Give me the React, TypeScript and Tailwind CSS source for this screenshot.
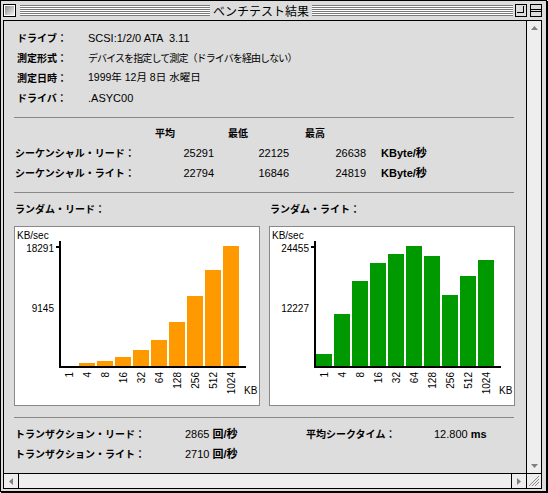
import React from "react";

const F = "font-['Liberation_Sans','Noto_Sans_CJK_JP',sans-serif]";

const XL = ["1", "4", "8", "16", "32", "64", "128", "256", "512", "1024"];

function Chart({ max, mid, heights, color }: { max: string; mid: string; heights: number[]; color: string }) {
  return (
    <div className="w-[246px] h-[180px] border border-[#888] bg-white">
      <svg width="244" height="178" className="block" fontFamily="'Liberation Sans', sans-serif" fontSize="10">
        <text x="2" y="12" fill="#000">KB/sec</text>
        <text x="39" y="25" textAnchor="end" fill="#000">{max}</text>
        <rect x="41" y="19" width="3" height="2" fill="#000" />
        <text x="39" y="85" textAnchor="end" fill="#000">{mid}</text>
        <rect x="44" y="14" width="2" height="127" fill="#000" />
        <rect x="44" y="139" width="187" height="2" fill="#000" />
        {heights.map((h, i) => (
          <rect key={i} x={46 + i * 18} y={139 - h} width="16" height={h} fill={color} />
        ))}
        {XL.map((l, i) => {
          const x = 46 + i * 18 + 8 + 3.5;
          const y = 145;
          return (
            <text key={l} x={x} y={y} textAnchor="end" fill="#000" transform={`rotate(-90 ${x} ${y})`}>
              {l}
            </text>
          );
        })}
        <text x="229" y="167" fill="#000">KB</text>
      </svg>
    </div>
  );
}

function Stripes({ className }: { className: string }) {
  return (
    <div className={className}>
      {[0, 1, 2, 3, 4].map((i) => (
        <React.Fragment key={i}>
          <div className="h-px bg-[#7a7a7a]" />
          <div className="h-px bg-white" />
        </React.Fragment>
      ))}
      <div className="h-px bg-[#7a7a7a]" />
    </div>
  );
}

export default function App() {
  return (
    <div className={`w-[548px] h-[493px] bg-white ${F} text-black`}>
      <div className="w-[547px] h-[492px] border border-black shadow-[1px_1px_0_#000] bg-[#dddddd] flex flex-col">
        {/* title bar */}
        <div className="h-[19px] flex items-center pl-[2px] pr-[4px]">
          <div className="w-[13px] h-[13px] border border-black p-px bg-white">
            <div className="w-full h-full bg-gradient-to-br from-[#8a8a8a] to-[#f4f4f4]" />
          </div>
          <Stripes className="w-[190px] ml-[4px] flex flex-col" />
          <div className="w-[102px] text-center text-[12px] leading-[19px] font-['Noto_Sans_CJK_JP',sans-serif]">ベンチテスト結果</div>
          <Stripes className="flex-1 flex flex-col" />
          <div className="ml-[2px] w-[12px] h-[13px] border border-black bg-[#dddddd] relative">
            <div className="w-[7px] h-[7px] border-r border-b border-black ml-[1px] mt-[1px]" />
          </div>
          <div className="ml-[3px] w-[12px] h-[13px] border border-black bg-[#dddddd] flex flex-col justify-center">
            <div className="h-[3px] border-t border-b border-black mx-0" />
          </div>
        </div>
        {/* frame */}
        <div className="ml-[2px] mr-[4px] mb-[2px] border border-black flex-1 grid grid-cols-[522px_1px_14px] grid-rows-[452px_1px_14px]">
          {/* content */}
          <div className="bg-[#dddddd] pl-[10px] pr-[12px] pt-[7px] overflow-hidden">
            <div className="pl-[3px]">
              <div className="h-5 flex items-center">
                <div className="w-[71px] text-[10px] font-bold">ドライブ：</div>
                <div className="text-[11px] whitespace-pre">SCSI:1/2/0 ATA  3.11</div>
              </div>
              <div className="h-5 flex items-center">
                <div className="w-[71px] text-[10px] font-bold">測定形式：</div>
                <div className="text-[10px] tracking-[-0.9px]">デバイスを指定して測定（ドライバを経由しない）</div>
              </div>
              <div className="h-5 flex items-center">
                <div className="w-[71px] text-[10px] font-bold">測定日時：</div>
                <div className="text-[10.5px] whitespace-pre">1999年 12月 8日 水曜日</div>
              </div>
              <div className="h-5 flex items-center">
                <div className="w-[71px] text-[10px] font-bold">ドライバ：</div>
                <div className="text-[11px]">.ASYC00</div>
              </div>
            </div>
            <div className="mt-[9px] border-t border-[#888]" />
            <div className="mt-[5px] pl-px">
              <div className="h-5 flex items-center text-[10px] font-bold">
                <div className="w-[140px]" />
                <div className="w-[73px]">平均</div>
                <div className="w-[77px]">最低</div>
                <div>最高</div>
              </div>
              {[
                ["シーケンシャル・リード：", "25291", "22125", "26638"],
                ["シーケンシャル・ライト：", "22794", "16846", "24819"],
              ].map((r) => (
                <div key={r[0]} className="h-5 flex items-center">
                  <div className="w-[150px] text-[10px] font-bold">{r[0]}</div>
                  <div className="w-[49px] text-right text-[11px]">{r[1]}</div>
                  <div className="w-[75px] text-right text-[11px]">{r[2]}</div>
                  <div className="w-[77px] text-right text-[11px]">{r[3]}</div>
                  <div className="ml-[15px] text-[11px] font-bold">KByte/秒</div>
                </div>
              ))}
            </div>
            <div className="mt-[9px] border-t border-[#888]" />
            <div className="mt-[6px] h-5 flex items-center text-[10px] font-bold">
              <div className="w-[256px] pl-px">ランダム・リード：</div>
              <div>ランダム・ライト：</div>
            </div>
            <div className="mt-[7px] flex gap-[9px]">
              <Chart max="18291" mid="9145" color="#ff9900" heights={[0, 3, 5, 9, 16, 26, 44, 70, 96, 120]} />
              <Chart max="24455" mid="12227" color="#009900" heights={[12, 52, 85, 103, 112, 120, 110, 71, 90, 106]} />
            </div>
            <div className="mt-[11px] border-t border-[#888]" />
            <div className="mt-[6px] pl-px">
              <div className="h-5 flex items-center">
                <div className="w-[170px] text-[10px] font-bold">トランザクション・リード：</div>
                <div className="w-[121px] text-[11px]">2865 <span className="font-bold">回/秒</span></div>
                <div className="w-[128px] text-[10px] font-bold">平均シークタイム：</div>
                <div className="text-[11px]">12.800 <span className="font-bold">ms</span></div>
              </div>
              <div className="h-5 flex items-center">
                <div className="w-[170px] text-[10px] font-bold">トランザクション・ライト：</div>
                <div className="text-[11px]">2710 <span className="font-bold">回/秒</span></div>
              </div>
            </div>
          </div>
          {/* v line */}
          <div className="bg-black" />
          {/* v scroll */}
          <div className="bg-[#eeeeee] flex flex-col">
            <div className="h-[14px] flex items-center justify-center">
              <svg width="7" height="4"><polygon points="3.5,0 7,4 0,4" fill="#808080" /></svg>
            </div>
            <div className="flex-1" />
            <div className="h-[14px] flex items-center justify-center">
              <svg width="7" height="4"><polygon points="0,0 7,0 3.5,4" fill="#808080" /></svg>
            </div>
          </div>
          {/* h line */}
          <div className="bg-black col-span-3" />
          {/* h scroll */}
          <div className="bg-[#eeeeee] flex">
            <div className="w-[15px] border-r border-black flex items-center justify-center">
              <svg width="4" height="7"><polygon points="4,0 4,7 0,3.5" fill="#808080" /></svg>
            </div>
            <div className="flex-1" />
            <div className="w-[15px] border-l border-black flex items-center justify-center">
              <svg width="4" height="7"><polygon points="0,0 4,3.5 0,7" fill="#808080" /></svg>
            </div>
          </div>
          <div className="bg-black" />
          <div className="bg-[#eeeeee] flex items-center justify-center">
            <svg width="12" height="12">
              <line x1="4" y1="11" x2="11" y2="4" stroke="#888" />
              <line x1="7" y1="11" x2="11" y2="7" stroke="#888" />
              <line x1="1" y1="11" x2="11" y2="1" stroke="#888" />
            </svg>
          </div>
        </div>
      </div>
    </div>
  );
}
